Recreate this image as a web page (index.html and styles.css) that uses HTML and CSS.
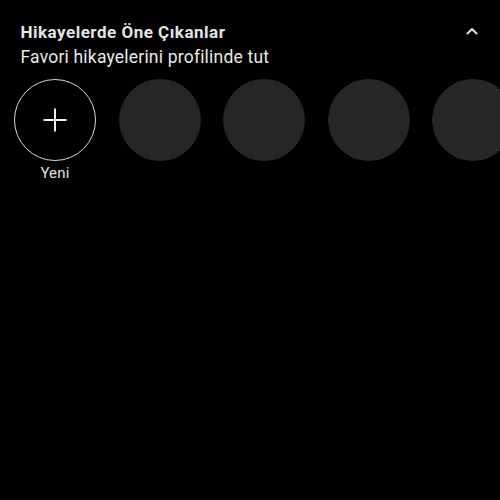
FILE: index.html
```html
<!DOCTYPE html>
<html lang="tr">
<head>
<meta charset="utf-8">
<link rel="stylesheet" href="styles.css">
</head>
<body>
<section class="highlights">
  <div class="head">
    <div class="titles">
      <div class="title">Hikayelerde Öne Çıkanlar</div>
      <div class="subtitle">Favori hikayelerini profilinde tut</div>
    </div>
    <svg class="chev" width="12" height="8" viewBox="0 0 12 8"><path d="M1.5 6.5 L6 2 L10.5 6.5" fill="none" stroke="#e0e0e0" stroke-width="2" stroke-linecap="round" stroke-linejoin="round"/></svg>
  </div>
  <div class="row">
    <div class="item">
      <div class="circle new">
        <svg width="24" height="24" viewBox="0 0 24 24"><path d="M12 0.5 V23.5 M0.5 12 H23.5" stroke="#f0f0f0" stroke-width="2" fill="none"/></svg>
      </div>
      <div class="label">Yeni</div>
    </div>
    <div class="item"><div class="circle empty"></div></div>
    <div class="item"><div class="circle empty"></div></div>
    <div class="item"><div class="circle empty"></div></div>
    <div class="item"><div class="circle empty"></div></div>
  </div>
</section>
</body>
</html>
```
FILE: styles.css
```css
html, body {
  margin: 0;
  padding: 0;
  background: #000;
  width: 500px;
  height: 500px;
  overflow: hidden;
  font-family: Roboto, "Noto Sans", Arial, sans-serif;
  color: #f0f0f0;
}
.highlights {
  padding-left: 14px;
}
.head {
  display: flex;
  align-items: flex-start;
  justify-content: space-between;
  padding: 22px 0 0 6.5px;
}
.title {
  font-size: 17px;
  font-weight: 700;
  line-height: 20px;
  letter-spacing: 0.5px;
  color: #e4e4e4;
}
.subtitle {
  margin-top: 4px;
  font-size: 17.5px;
  line-height: 22px;
  letter-spacing: 0.2px;
  color: #e8e8e8;
}
.chev {
  margin: 5px 22px 0 0;
}
.row {
  display: flex;
  gap: 22.5px;
  margin-top: 11px;
  overflow: hidden;
  white-space: nowrap;
}
.item {
  flex-shrink: 0;
  display: flex;
  flex-direction: column;
  align-items: center;
}
.circle {
  width: 82px;
  height: 82px;
  border-radius: 50%;
  box-sizing: border-box;
  display: flex;
  align-items: center;
  justify-content: center;
}
.circle.new {
  border: 1px solid #d8d8d8;
}
.circle.empty {
  background: #262626;
}
.label {
  margin-top: 4px;
  font-size: 15px;
  line-height: 16px;
  letter-spacing: 0.2px;
  color: #e0e0e0;
}
```
